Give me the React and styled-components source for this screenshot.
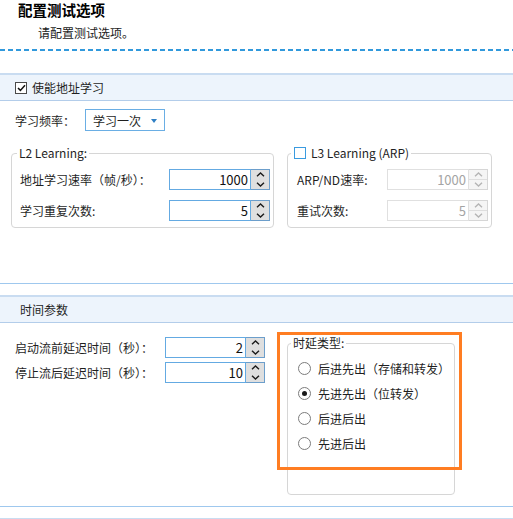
import React from 'react'
import styled, { createGlobalStyle } from 'styled-components'

const GlobalStyle = createGlobalStyle`
    html, body {
        margin: 0;
        padding: 0;
        background: #ffffff;
    }
    body {
        font-family: "Noto Sans CJK SC", "Noto Sans", sans-serif;
        font-size: 12px;
        color: #1f1f1f;
    }
`;

function Chevron({ up, color }) {
    return (
        <svg width="9" height="5" viewBox="0 0 9 5">
            <path
                d={up ? "M1 4.2 L4.5 1 L8 4.2" : "M1 0.8 L4.5 4 L8 0.8"}
                fill="none"
                stroke={color}
                strokeWidth="1.4"
            />
        </svg>
    )
}

function SpinBox({ value, width, disabled }) {
    const arrow = disabled ? "#b4b4b4" : "#1a1a1a"
    return (
        <SpinWrap width={width}>
            <SpinText disabled={disabled}>{value}</SpinText>
            <SpinButtons disabled={disabled}>
                <SpinHalf disabled={disabled}><Chevron up color={arrow} /></SpinHalf>
                <SpinHalf disabled={disabled}><Chevron color={arrow} /></SpinHalf>
            </SpinButtons>
        </SpinWrap>
    )
}

function App() {
    return (
        <>
            <GlobalStyle />
            <Page>
                <Title>配置测试选项</Title>
                <Subtitle>请配置测试选项。</Subtitle>
                <DashedRule />

                <Section first>
                    <SectionBar>
                        <CheckBox>
                            <svg width="9" height="8" viewBox="0 0 9 8">
                                <path d="M1 4 L3.4 6.4 L8 1.2" fill="none" stroke="#111" strokeWidth="1.5" />
                            </svg>
                        </CheckBox>
                        <BarText>使能地址学习</BarText>
                    </SectionBar>
                    <SectionBody height={183}>
                        <FreqRow>
                            <FreqLabel>学习频率：</FreqLabel>
                            <Dropdown>
                                <span>学习一次</span>
                                <DropArrow />
                            </Dropdown>
                        </FreqRow>
                        <GroupRow>
                            <GroupBox width={263} padLeft={8}>
                                <Legend shift={-3}>L2 Learning:</Legend>
                                <FieldRows top={7} gap={9}>
                                    <FieldRow>
                                        <FieldLabel width={149}>地址学习速率（帧/秒）：</FieldLabel>
                                        <SpinBox value="1000" width={101} />
                                    </FieldRow>
                                    <FieldRow>
                                        <FieldLabel width={149}>学习重复次数:</FieldLabel>
                                        <SpinBox value="5" width={101} />
                                    </FieldRow>
                                </FieldRows>
                            </GroupBox>
                            <GroupBox width={205} padLeft={9}>
                                <Legend shift={-6}>
                                    <LegendInner>
                                        <CheckBox blue />
                                        <span>L3 Learning (ARP)</span>
                                    </LegendInner>
                                </Legend>
                                <FieldRows top={6} gap={9}>
                                    <FieldRow>
                                        <FieldLabel width={90}>ARP/ND速率:</FieldLabel>
                                        <SpinBox value="1000" width={101} disabled />
                                    </FieldRow>
                                    <FieldRow>
                                        <FieldLabel width={90}>重试次数:</FieldLabel>
                                        <SpinBox value="5" width={101} disabled />
                                    </FieldRow>
                                </FieldRows>
                            </GroupBox>
                        </GroupRow>
                    </SectionBody>
                </Section>

                <Section>
                    <SectionBar>
                        <BarText>时间参数</BarText>
                    </SectionBar>
                    <SectionBody height={184}>
                        <TimeLayout>
                            <FieldRows top={1} gap={3} width={250}>
                                <FieldRow>
                                    <FieldLabel width={150}>启动流前延迟时间（秒）：</FieldLabel>
                                    <SpinBox value="2" width={100} />
                                </FieldRow>
                                <FieldRow>
                                    <FieldLabel width={150}>停止流后延迟时间（秒）：</FieldLabel>
                                    <SpinBox value="10" width={100} />
                                </FieldRow>
                            </FieldRows>
                            <DelayWrap>
                                <DelayBox>
                                    <Legend shift={-7}>时延类型:</Legend>
                                    <RadioList>
                                        {["后进先出（存储和转发）", "先进先出（位转发）", "后进后出", "先进后出"].map((t, i) => (
                                            <RadioRow key={t}>
                                                <Radio checked={i === 1} />
                                                <span>{t}</span>
                                            </RadioRow>
                                        ))}
                                    </RadioList>
                                </DelayBox>
                                <Highlight />
                            </DelayWrap>
                        </TimeLayout>
                    </SectionBody>
                </Section>

                <Section>
                    <SectionBar />
                </Section>
            </Page>
        </>
    )
}

const Page = styled.div`
    width: 513px;
    height: 519px;
    overflow: hidden;
`;
const Title = styled.div`
    padding-left: 18px;
    font-size: 14.5px;
    font-weight: 700;
    line-height: 20px;
    color: #000;
`;
const Subtitle = styled.div`
    padding-left: 38px;
    margin-top: 4px;
    font-size: 12px;
    line-height: 18px;
    color: #222;
`;
const DashedRule = styled.div`
    margin-top: 7px;
    height: 2px;
    background: repeating-linear-gradient(to right, #3199dc 0 5px, transparent 5px 8px);
`;
const Section = styled.div`
    margin-top: ${({ first }) => (first ? "22px" : "11px")};
`;
const SectionBar = styled.div`
    box-sizing: border-box;
    height: 28px;
    display: flex;
    align-items: center;
    padding-left: 15px;
    background: #edf4fc;
    border-top: 2px solid #c9dcf1;
    border-bottom: 1px solid #b3cdea;
`;
const BarText = styled.span`
    margin-left: 5px;
    font-size: 12px;
    color: #1f1f1f;
`;
const CheckBox = styled.span`
    box-sizing: border-box;
    width: 12px;
    height: 12px;
    display: inline-flex;
    align-items: center;
    justify-content: center;
    background: #fff;
    border: 1px solid ${({ blue }) => (blue ? "#3a9be0" : "#4a4a4a")};
`;
const SectionBody = styled.div`
    box-sizing: border-box;
    height: ${({ height }) => height}px;
    padding: 8px 0 0 11px;
    border-bottom: 1px solid #9fc8ee;
`;
const FreqRow = styled.div`
    display: flex;
    align-items: center;
    padding-left: 4px;
`;
const FreqLabel = styled.span`
    width: 70px;
`;
const Dropdown = styled.div`
    box-sizing: border-box;
    width: 80px;
    height: 22px;
    display: flex;
    align-items: center;
    justify-content: space-between;
    padding: 0 7px;
    border: 1px solid #6aaee4;
    background: #fff;
`;
const DropArrow = styled.span`
    width: 0;
    height: 0;
    margin-top: 1px;
    border-left: 3.5px solid transparent;
    border-right: 3.5px solid transparent;
    border-top: 4px solid #2f7fc4;
`;
const GroupRow = styled.div`
    display: flex;
    gap: 13px;
    margin-top: 14px;
`;
const GroupBox = styled.fieldset`
    box-sizing: border-box;
    width: ${({ width }) => width}px;
    height: 83px;
    margin: 0;
    padding: 0 3px 0 ${({ padLeft }) => padLeft}px;
    border: 1px solid #d6d6d6;
    border-radius: 4px;
    min-width: 0;
`;
const Legend = styled.legend`
    margin-left: ${({ shift }) => shift}px;
    padding: 0 2px;
    font-size: 12px;
    line-height: 16px;
    color: #1f1f1f;
`;
const LegendInner = styled.span`
    display: inline-flex;
    align-items: center;
    gap: 5px;
    padding-left: 1px;
`;
const FieldRows = styled.div`
    display: flex;
    flex-direction: column;
    gap: ${({ gap }) => gap}px;
    margin-top: ${({ top }) => top}px;
    width: ${({ width }) => (width ? `${width}px` : "auto")};
    flex-shrink: 0;
`;
const FieldRow = styled.div`
    display: flex;
    align-items: center;
    height: 22px;
`;
const FieldLabel = styled.span`
    width: ${({ width }) => width}px;
    flex-shrink: 0;
    white-space: nowrap;
`;
const SpinWrap = styled.div`
    display: flex;
    width: ${({ width }) => width}px;
    height: 21px;
`;
const SpinText = styled.div`
    box-sizing: border-box;
    flex: 1;
    display: flex;
    align-items: center;
    justify-content: flex-end;
    padding-right: 2px;
    font-size: 13px;
    color: ${({ disabled }) => (disabled ? "#a4a4a4" : "#111")};
    background: #fff;
    border: 1px solid ${({ disabled }) => (disabled ? "#e0e0e0" : "#64aae2")};
`;
const SpinButtons = styled.div`
    box-sizing: border-box;
    width: 19px;
    display: flex;
    flex-direction: column;
    border: 1px solid ${({ disabled }) => (disabled ? "#d6d6d6" : "#6c9ecb")};
    border-left: none;
    background: ${({ disabled }) => (disabled ? "#f5f5f5" : "#dfdfdf")};
`;
const SpinHalf = styled.div`
    flex: 1;
    display: flex;
    align-items: center;
    justify-content: center;
    & + & {
        border-top: 1px solid ${({ disabled }) => (disabled ? "#dedede" : "#a6a6a6")};
    }
`;
const TimeLayout = styled.div`
    display: flex;
    align-items: flex-start;
    padding-left: 4px;
    margin-top: 4px;
`;
const DelayWrap = styled.div`
    position: relative;
    margin-left: 22px;
`;
const DelayBox = styled.fieldset`
    box-sizing: border-box;
    width: 167px;
    height: 160px;
    margin: 0;
    padding: 0 4px 0 10px;
    border: 1px solid #d6d6d6;
    border-radius: 4px;
`;
const RadioList = styled.div`
    display: flex;
    flex-direction: column;
    margin-top: 5px;
`;
const RadioRow = styled.div`
    height: 25px;
    display: flex;
    align-items: center;
    gap: 7px;
    white-space: nowrap;
`;
const Radio = styled.span`
    box-sizing: border-box;
    width: 13px;
    height: 13px;
    border-radius: 50%;
    border: 1px solid #7c7c7c;
    background: #fff;
    display: flex;
    align-items: center;
    justify-content: center;
    &::after {
        content: "";
        width: 5px;
        height: 5px;
        border-radius: 50%;
        background: ${({ checked }) => (checked ? "#1a1a1a" : "transparent")};
    }
`;
const Highlight = styled.div`
    position: absolute;
    left: -10px;
    top: -3px;
    width: 185px;
    height: 138px;
    box-sizing: border-box;
    border: 3px solid #ff7d22;
    pointer-events: none;
`;

export default App
